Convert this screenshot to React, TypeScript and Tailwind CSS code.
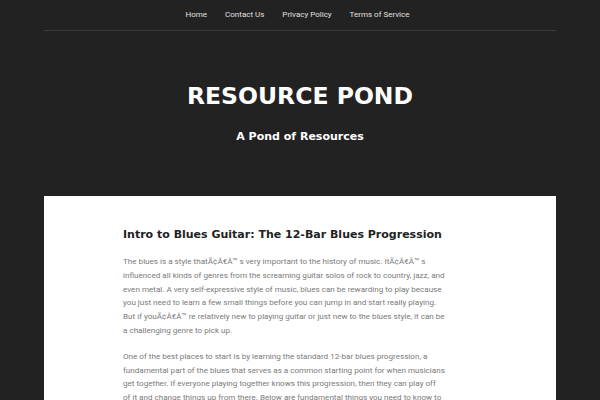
import React from 'react';

const navItems = ['Home', 'Contact Us', 'Privacy Policy', 'Terms of Service'];

export default function App() {
    return (
        <div className="min-h-screen bg-[#222222]" style={{ fontFamily: 'Roboto, sans-serif' }}>
            {/* Navigation */}
            <div className="mx-[44px] border-b border-[#3a3a3a]">
                <nav className="flex justify-center h-[30px] items-center gap-[18px] text-[8px] text-[#e0e0e0] pr-[5px]">
                    {navItems.map((n) => (
                        <a key={n}>{n}</a>
                    ))}
                </nav>
            </div>

            {/* Branding */}
            <header className="flex flex-col items-center pt-[50px] pb-[52px]" style={{ fontFamily: '"DejaVu Sans", sans-serif' }}>
                <h1 className="text-[23.5px] leading-[30px] font-bold text-white">RESOURCE POND</h1>
                <p className="mt-[19px] text-[11px] leading-[14px] font-bold text-white">A Pond of Resources</p>
            </header>

            {/* Content */}
            <main className="mx-[44px] bg-white pt-[31px] pb-10">
                <article className="w-[330px] ml-[79px]">
                    <h2 className="text-[11px] leading-[16px] font-bold text-[#222]" style={{ fontFamily: '"DejaVu Sans", sans-serif' }}>
                        Intro to Blues Guitar: The 12-Bar Blues Progression
                    </h2>
                    <div className="mt-[12px] w-[327px] text-[8.1px] leading-[13.8px] text-[#7a7a7a] space-y-[12px]">
                        <p>
                            The blues is a style thatÃ¢Â€Â™ s very important to the history of music. ItÃ¢Â€Â™ s influenced all kinds of genres from the screaming guitar solos of rock to country, jazz, and even metal. A very self-expressive style of music, blues can be rewarding to play because you just need to learn a few small things before you can jump in and start really playing. But if youÃ¢Â€Â™ re relatively new to playing guitar or just new to the blues style, it can be a challenging genre to pick up.
                        </p>
                        <p>
                            One of the best places to start is by learning the standard 12-bar blues progression, a fundamental part of the blues that serves as a common starting point for when musicians get together. If everyone playing together knows this progression, then they can play off {'of\u00A0it\u00A0and'} change things up from there. Below are fundamental things you need to know to get started.
                        </p>
                    </div>
                </article>
            </main>
        </div>
    );
}
